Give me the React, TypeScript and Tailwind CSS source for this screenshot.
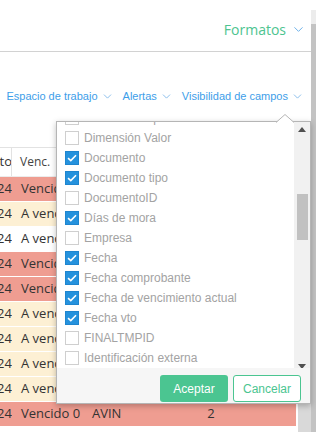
import { ChevronDown } from "lucide-react";

const fields = [
  { label: "Dimensión Tipo", checked: false },
  { label: "Dimensión Valor", checked: false },
  { label: "Documento", checked: true },
  { label: "Documento tipo", checked: true },
  { label: "DocumentoID", checked: false },
  { label: "Días de mora", checked: true },
  { label: "Empresa", checked: false },
  { label: "Fecha", checked: true },
  { label: "Fecha comprobante", checked: true },
  { label: "Fecha de vencimiento actual", checked: true },
  { label: "Fecha vto", checked: true },
  { label: "FINALTMPID", checked: false },
  { label: "Identificación externa", checked: false },
];

type RowKind = "red" | "yellow" | "white";

const rows: { kind: RowKind; state: string; code?: string; qty?: string }[] = [
  { kind: "red", state: "Vencido" },
  { kind: "yellow", state: "A vence" },
  { kind: "white", state: "A vence" },
  { kind: "red", state: "Vencido" },
  { kind: "red", state: "Vencido" },
  { kind: "yellow", state: "A vence" },
  { kind: "yellow", state: "A vence" },
  { kind: "yellow", state: "A vence" },
  { kind: "yellow", state: "A vence" },
  { kind: "red", state: "Vencido 0", code: "AVIN", qty: "2" },
];

const rowBg: Record<RowKind, string> = {
  red: "bg-[#ef9d91]",
  yellow: "bg-[#fdf0d4]",
  white: "bg-white",
};

function Check({ checked }: { checked: boolean }) {
  if (!checked) {
    return <span className="block w-[14px] h-[14px] border border-[#cfcfcf] bg-white" />;
  }
  return (
    <span className="flex items-center justify-center w-[14px] h-[14px] bg-[#2592dd] border border-[#1f86cf]">
      <svg width="10" height="8" viewBox="0 0 10 8">
        <path d="M1 4.2 L3.8 6.6 L9 1.2" fill="none" stroke="white" strokeWidth="1.6" />
      </svg>
    </span>
  );
}

function FieldsDropdown() {
  return (
    <div className="absolute left-[56px] top-[121px] w-[255px] h-[283px] bg-white border border-[#b5b5b5] shadow-[0_2px_6px_rgba(0,0,0,0.25)] flex flex-col">
      <svg className="absolute -top-[8px] left-[219px]" width="18" height="9" viewBox="0 0 18 9">
        <path d="M0 8.5 L9 0.5 L18 8.5" fill="white" stroke="#b5b5b5" strokeWidth="1" />
      </svg>
      <div className="flex h-[246px] overflow-hidden">
        <div className="flex-1 overflow-hidden">
          <div className="-mt-[14px]">
            {fields.map((f) => (
              <div key={f.label} className="flex items-center h-[20px] pl-[8px] gap-[5px]">
                <Check checked={f.checked} />
                <span className="text-[12px] text-[#a3a3a3] whitespace-nowrap font-['Liberation_Sans',sans-serif]">
                  {f.label}
                </span>
              </div>
            ))}
          </div>
        </div>
        <div className="w-[16px] bg-[#f1f1f1] flex flex-col items-center">
          <svg className="mt-[5px]" width="8" height="5" viewBox="0 0 8 5">
            <path d="M0 5 L4 0 L8 5 Z" fill="#505050" />
          </svg>
          <div className="mt-[62px] w-[11px] h-[46px] bg-[#c1c1c1]" />
          <div className="flex-1" />
          <svg className="mb-[-1px]" width="8" height="5" viewBox="0 0 8 5">
            <path d="M0 0 L8 0 L4 5 Z" fill="#505050" />
          </svg>
        </div>
      </div>
      <div className="flex-1 bg-[#f6f6f6] flex justify-end items-start pt-[7px] pr-[9px] gap-[5px]">
        <button className="w-[68px] h-[27px] rounded-[3px] bg-[#4bc591] text-white text-[12px] font-['Liberation_Sans',sans-serif]">
          Aceptar
        </button>
        <button className="w-[68px] h-[27px] rounded-[3px] bg-white border border-[#4bc591] text-[#4bc591] text-[12px] font-['Liberation_Sans',sans-serif]">
          Cancelar
        </button>
      </div>
    </div>
  );
}

export default function App() {
  return (
    <div className="relative w-[316px] h-[432px] overflow-hidden bg-white flex">
      <div className="w-[311px] flex flex-col">
        <header className="h-[52px] border-b border-[#d2d2d2] flex items-center justify-end pr-[5px] pt-[8px]">
          <span className="text-[14px] text-[#4dc490] font-['Open_Sans',sans-serif]">Formatos</span>
          <ChevronDown className="ml-[5px] w-[15px] h-[15px] text-[#5aa7e6]" strokeWidth={1.4} />
        </header>

        <nav className="mt-[36px] flex justify-end items-center pr-[7px] gap-[9px] text-[11px] text-[#3d9ee9] font-['Liberation_Sans',sans-serif]">
          {["Espacio de trabajo", "Alertas", "Visibilidad de campos"].map((l) => (
            <span key={l} className="flex items-center gap-[3px] whitespace-nowrap">
              {l}
              <ChevronDown className="w-[13px] h-[13px] text-[#6aace6]" strokeWidth={1.4} />
            </span>
          ))}
        </nav>

        <div className="mt-[42px] flex flex-1 min-h-0">
          <div className="w-[296px] overflow-hidden font-['Open_Sans',sans-serif] text-[13px] text-[#333]">
            <div className="flex h-[30px] border-t border-[#e2e2e2] border-b border-b-[#ececec] bg-white items-center">
              <div className="w-[12px] h-full border-r border-[#e2e2e2] flex items-center justify-end overflow-hidden">
                <span className="-mr-[1px]">to</span>
              </div>
              <div className="pl-[8px] text-[12px] text-[#444]">Venc.</div>
            </div>
            {rows.map((r, i) => (
              <div key={i} className={`flex h-[25px] items-center border-b border-white ${rowBg[r.kind]}`}>
                <div className="w-[12px] overflow-hidden flex justify-end">
                  <span>024</span>
                </div>
                <div className="w-[80px] pl-[9px] whitespace-nowrap">{r.state}</div>
                <div className="w-[80px] whitespace-nowrap">{r.code}</div>
                <div className="w-[78px] text-center">{r.qty}</div>
              </div>
            ))}
          </div>
          <div className="ml-[2px] w-[13px] bg-[#d9d9d9]" />
        </div>
      </div>
      <div className="w-[5px] mt-[10px] bg-[#c3c3c3] border-t-[14px] border-[#ececec]" />
      <FieldsDropdown />
    </div>
  );
}
